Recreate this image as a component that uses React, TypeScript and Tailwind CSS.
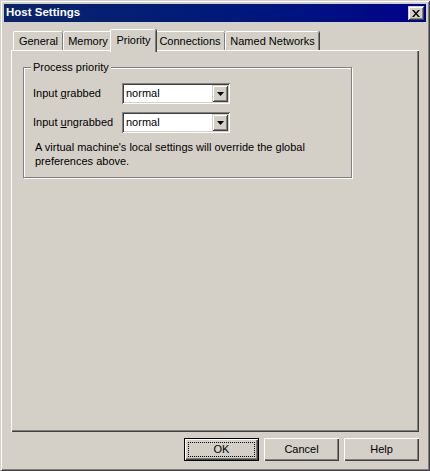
import React from 'react';

// Host Settings — Win2000 style property sheet, Priority tab active

const raised =
  'shadow-[inset_1px_1px_0_#ffffff,inset_-1px_-1px_0_#404040,inset_-2px_-2px_0_#808080]';
const smallBtn =
  'shadow-[inset_1px_1px_0_#d4d0c8,inset_-1px_-1px_0_#404040,inset_2px_2px_0_#ffffff,inset_-2px_-2px_0_#808080]';
const sunken =
  'shadow-[inset_1px_1px_0_#808080,inset_-1px_-1px_0_#ffffff,inset_2px_2px_0_#404040,inset_-2px_-2px_0_#d4d0c8]';

const TABS = [
  { label: 'General', w: 'w-[50px]' },
  { label: 'Memory', w: 'w-[49px]' },
  { label: 'Priority', w: 'w-[46px]', active: true },
  { label: 'Connections', w: 'w-[71px]' },
  { label: 'Named Networks', w: 'w-[94px]' },
];

function Tab({ label, w, active }: { label: string; w: string; active?: boolean }) {
  if (active) {
    return (
      <div
        className={`relative z-10 -mx-[2px] flex h-[23px] items-start justify-center rounded-tl-[2px] rounded-tr-[2px] border-l border-t border-white bg-[#d4d0c8] pt-[4px] shadow-[inset_-1px_0_0_#808080,1px_0_0_#404040] ${w}`}
      >
        {label}
      </div>
    );
  }
  return (
    <div
      className={`mt-[2px] flex h-[19px] items-start justify-center rounded-tl-[2px] rounded-tr-[2px] border-l border-t border-white pt-[3px] shadow-[inset_-1px_0_0_#808080,1px_0_0_#404040] ${w}`}
    >
      {label}
    </div>
  );
}

function Combo({ value }: { value: string }) {
  return (
    <div className={`flex h-[21px] w-[108px] items-center bg-white p-[2px] ${sunken}`}>
      <span className="flex-1 pl-[2px] leading-[13px]">{value}</span>
      <div className={`flex h-[17px] w-[16px] items-center justify-center bg-[#d4d0c8] ${smallBtn}`}>
        <svg width="7" height="4" viewBox="0 0 7 4">
          <polygon points="0,0 7,0 3.5,4" fill="#000" />
        </svg>
      </div>
    </div>
  );
}

function PushButton({ children, isDefault }: { children: React.ReactNode; isDefault?: boolean }) {
  if (isDefault) {
    return (
      <button className="h-[23px] w-[75px] border border-black bg-[#d4d0c8] shadow-[inset_1px_1px_0_#ffffff,inset_-1px_-1px_0_#404040,inset_-2px_-2px_0_#808080] p-[3px]">
        <span className="flex h-full w-full items-center justify-center border border-dotted border-black">
          {children}
        </span>
      </button>
    );
  }
  return (
    <button className="flex h-[23px] w-[75px] items-center justify-center bg-[#d4d0c8] shadow-[inset_1px_1px_0_#ffffff,inset_-1px_-1px_0_#404040,inset_-2px_-2px_0_#808080]">
      {children}
    </button>
  );
}

export default function App() {
  return (
    <div className="flex h-screen w-screen flex-col bg-[#d4d0c8] p-[4px] font-['Liberation_Sans',Arial,sans-serif] text-[11px] text-black shadow-[inset_1px_1px_0_#d4d0c8,inset_-1px_-1px_0_#404040,inset_2px_2px_0_#ffffff,inset_-2px_-2px_0_#808080]">
      {/* Title bar */}
      <div className="flex h-[18px] items-center bg-linear-to-r from-[#0a246a] to-[#00008a] pl-[2px] pr-[2px]">
        <span className="text-[11.5px] font-bold text-white">Host Settings</span>
        <div className={`ml-auto flex h-[14px] w-[16px] items-center justify-center bg-[#d4d0c8] ${smallBtn}`}>
          <svg width="8" height="7" viewBox="0 0 8 7">
            <path d="M0 0h2l2 2.5L6 0h2L5 3.5 8 7H6L4 4.5 2 7H0l3-3.5z" fill="#000" />
          </svg>
        </div>
      </div>

      <div className="flex flex-1 flex-col px-[7px] pt-[7px] pb-[6px]">
        {/* Tabs */}
        <div className="flex h-[21px] pl-[2px] leading-[13px]">
          {TABS.map((t) => (
            <Tab key={t.label} {...t} />
          ))}
        </div>

        {/* Panel */}
        <div className={`flex-1 bg-[#d4d0c8] pl-[12px] pt-[17px] ${raised}`}>
          <div className="relative w-[329px] border border-[#808080] pl-[9px] pt-[15px] pb-[9px] shadow-[inset_1px_1px_0_#ffffff,1px_1px_0_#ffffff]">
            <span className="absolute -top-[7px] left-[7px] bg-[#d4d0c8] px-[2px] leading-[13px]">
              Process priority
            </span>
            <div className="flex flex-col gap-[8px]">
              <div className="flex items-center">
                <span className="w-[89px]">
                  Input <u>g</u>rabbed
                </span>
                <Combo value="normal" />
              </div>
              <div className="flex items-center">
                <span className="w-[89px]">
                  Input <u>u</u>ngrabbed
                </span>
                <Combo value="normal" />
              </div>
            </div>
            <p className="mt-[7px] w-[285px] pl-[2px] leading-[14px]">
              A virtual machine's local settings will override the global preferences above.
            </p>
          </div>
        </div>

        {/* Buttons */}
        <div className="mt-[6px] flex justify-end gap-[5px]">
          <PushButton isDefault>OK</PushButton>
          <PushButton>Cancel</PushButton>
          <PushButton>Help</PushButton>
        </div>
      </div>
    </div>
  );
}
